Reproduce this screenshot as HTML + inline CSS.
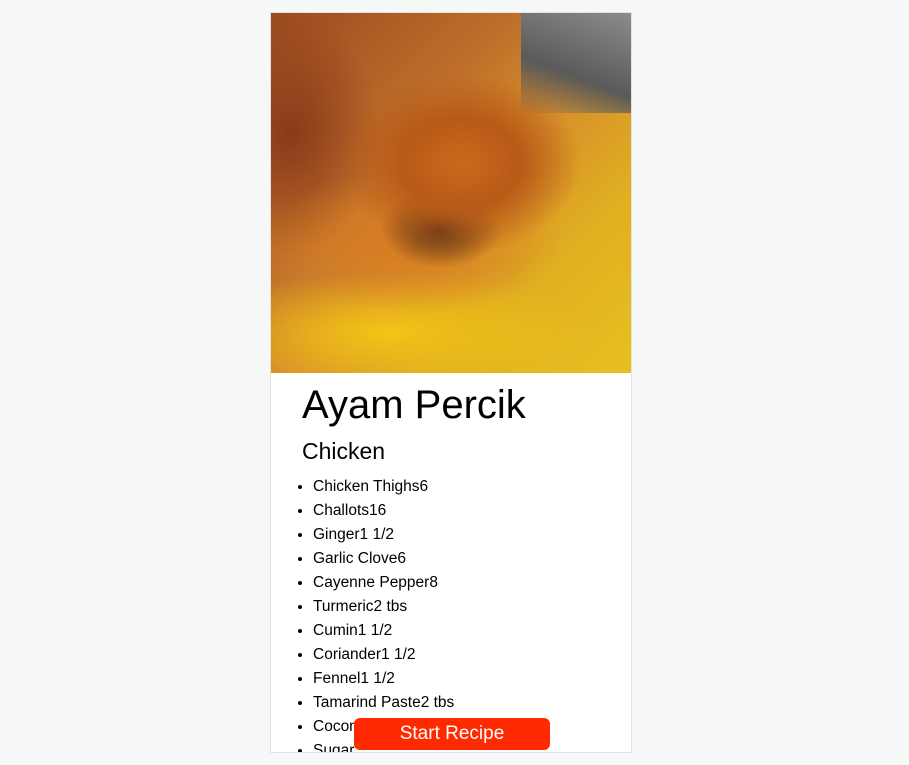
<!DOCTYPE html>
<html><head><style>
html,body{margin:0;padding:0;background:#f6f7f7;width:909px;height:765px;overflow:hidden;font-family:"Liberation Sans",sans-serif;}
.card{position:absolute;left:270px;top:12px;width:360px;height:739px;background:#fff;border:1px solid #e2e2e2;overflow:hidden;}
.img{position:absolute;left:0;top:0;width:360px;height:360px;background:
radial-gradient(ellipse 120px 90px at 190px 150px,#c86a1c 0%,#b85a18 50%,rgba(180,90,20,0) 100%),
radial-gradient(ellipse 60px 40px at 170px 215px,#4a2a14 0%,rgba(80,40,20,0) 100%),
radial-gradient(ellipse 150px 70px at 140px 230px,#d87a22 0%,rgba(210,120,30,0) 100%),
radial-gradient(ellipse 200px 60px at 120px 320px,#f2c416 0%,rgba(240,190,20,0) 100%),
radial-gradient(ellipse 90px 120px at 20px 120px,#8a3a1a 0%,rgba(130,60,30,0) 100%),
linear-gradient(135deg,#9a4a20 0%,#c0702a 35%,#d8922a 55%,#e0b020 75%,#e8c020 100%);}
.tray{position:absolute;right:0;top:0;width:110px;height:100px;background:linear-gradient(200deg,#8c8c8c,#5a5a5a 60%,rgba(90,90,90,0));}
h1{position:absolute;left:31px;top:370px;margin:0;font-weight:normal;font-size:40px;color:#000;}
h2{position:absolute;left:31px;top:425px;margin:0;font-weight:normal;font-size:23px;color:#000;}
ul{position:absolute;left:0;top:462px;margin:0;padding-left:42px;font-size:15.5px;line-height:24px;color:#000;}
.btn{position:absolute;left:83px;top:705px;width:196px;height:32px;background:#ff2a00;border-radius:6px;color:#fff;font-size:19px;text-align:center;line-height:32px;}
</style></head><body>
<div class="card">
<div class="img"><div class="tray"></div></div>
<h1>Ayam Percik</h1>
<h2>Chicken</h2>
<ul>
<li>Chicken Thighs6</li><li>Challots16</li><li>Ginger1 1/2</li><li>Garlic Clove6</li><li>Cayenne Pepper8</li><li>Turmeric2 tbs</li><li>Cumin1 1/2</li><li>Coriander1 1/2</li><li>Fennel1 1/2</li><li>Tamarind Paste2 tbs</li><li>Coconut Milk</li><li>Sugar</li>
</ul>
<div class="btn">Start Recipe</div>
</div>
</body></html>
